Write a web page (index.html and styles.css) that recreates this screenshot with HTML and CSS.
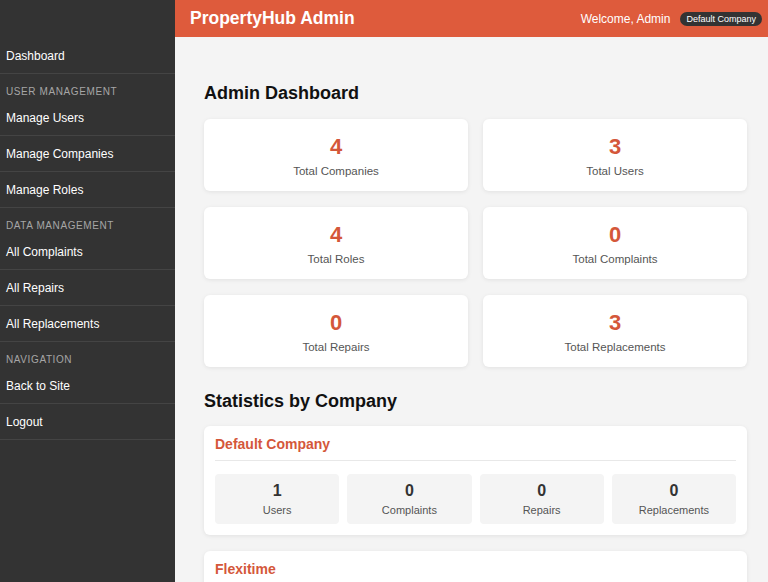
FILE: index.html
```html
<!DOCTYPE html>
<html>
<head>
<meta charset="utf-8">
<link rel="stylesheet" href="styles.css">
</head>
<body>
<div class="layout">
  <aside class="sidebar">
    <a class="nav-item">Dashboard</a>
    <div class="nav-heading">User Management</div>
    <a class="nav-item">Manage Users</a>
    <a class="nav-item">Manage Companies</a>
    <a class="nav-item">Manage Roles</a>
    <div class="nav-heading">Data Management</div>
    <a class="nav-item">All Complaints</a>
    <a class="nav-item">All Repairs</a>
    <a class="nav-item">All Replacements</a>
    <div class="nav-heading">Navigation</div>
    <a class="nav-item">Back to Site</a>
    <a class="nav-item">Logout</a>
  </aside>
  <div class="main">
    <header class="topbar">
      <div class="brand">PropertyHub Admin</div>
      <div class="user">
        <span class="welcome">Welcome, Admin</span>
        <span class="badge">Default Company</span>
      </div>
    </header>
    <div class="content">
      <h1 class="title">Admin Dashboard</h1>
      <div class="stats-grid">
        <div class="stat-card"><div class="stat-num">4</div><div class="stat-label">Total Companies</div></div>
        <div class="stat-card"><div class="stat-num">3</div><div class="stat-label">Total Users</div></div>
        <div class="stat-card"><div class="stat-num">4</div><div class="stat-label">Total Roles</div></div>
        <div class="stat-card"><div class="stat-num">0</div><div class="stat-label">Total Complaints</div></div>
        <div class="stat-card"><div class="stat-num">0</div><div class="stat-label">Total Repairs</div></div>
        <div class="stat-card"><div class="stat-num">3</div><div class="stat-label">Total Replacements</div></div>
      </div>
      <h2 class="title title-2">Statistics by Company</h2>
      <div class="company-card">
        <div class="company-name">Default Company</div>
        <div class="company-stats">
          <div class="cstat"><div class="cstat-num">1</div><div class="cstat-label">Users</div></div>
          <div class="cstat"><div class="cstat-num">0</div><div class="cstat-label">Complaints</div></div>
          <div class="cstat"><div class="cstat-num">0</div><div class="cstat-label">Repairs</div></div>
          <div class="cstat"><div class="cstat-num">0</div><div class="cstat-label">Replacements</div></div>
        </div>
      </div>
      <div class="company-card company-card-last">
        <div class="company-name">Flexitime</div>
      </div>
    </div>
  </div>
</div>
</body>
</html>
```
FILE: styles.css
```css
* { box-sizing: border-box; }
html, body { margin: 0; padding: 0; height: 100%; overflow: hidden; }
body {
  font-family: "Liberation Sans", Arial, sans-serif;
  background: #f4f4f4;
  color: #222;
}
.layout { display: flex; height: 582px; overflow: hidden; }
.sidebar {
  width: 175px;
  flex: 0 0 175px;
  background: #333333;
  padding-top: 38px;
  display: flex;
  flex-direction: column;
}
.nav-item {
  display: block;
  height: 36px;
  line-height: 36px;
  padding-left: 6px;
  color: #ffffff;
  font-size: 12px;
  border-bottom: 1px solid #444;
}
.nav-heading {
  height: 26px;
  padding-left: 6px;
  padding-top: 12px;
  color: #a6a6a6;
  font-size: 10px;
  letter-spacing: 0.6px;
  text-transform: uppercase;
  line-height: 12px;
}
.main { flex: 1; display: flex; flex-direction: column; min-width: 0; overflow: hidden; }
.topbar {
  flex: 0 0 37px;
  height: 37px;
  background: #de5b3c;
  display: flex;
  align-items: center;
  justify-content: space-between;
  padding: 0 6px 0 15px;
  color: #fff;
}
.brand { font-size: 17.5px; font-weight: bold; }
.user { display: flex; align-items: center; gap: 10px; }
.welcome { font-size: 12px; }
.badge {
  background: #333;
  color: #fff;
  font-size: 9px;
  padding: 2px 6px;
  border-radius: 8px;
  line-height: 10px;
}
.content { padding: 0 21px 0 29px; }
.title {
  margin: 0;
  font-size: 18px;
  font-weight: bold;
  color: #111;
  padding-top: 45px;
  padding-bottom: 15px;
  line-height: 22px;
}
.title-2 { padding-top: 23px; padding-bottom: 14px; }
.stats-grid {
  display: grid;
  grid-template-columns: 1fr 1fr;
  column-gap: 15px;
  row-gap: 16px;
}
.stat-card {
  background: #fff;
  border-radius: 6px;
  height: 72px;
  box-shadow: 0 1px 4px rgba(0,0,0,0.08);
  display: flex;
  flex-direction: column;
  align-items: center;
  padding-top: 16px;
}
.stat-num { font-size: 22px; font-weight: bold; color: #d4573a; line-height: 24px; }
.stat-label { font-size: 11.5px; color: #555; margin-top: 5px; line-height: 14px; }
.company-card {
  background: #fff;
  border-radius: 6px;
  box-shadow: 0 1px 4px rgba(0,0,0,0.08);
  padding: 10px 11px 11px 11px;
  margin-bottom: 16px;
}
.company-card-last { height: 60px; }
.company-name {
  font-size: 14px;
  font-weight: bold;
  color: #d4573a;
  line-height: 16px;
  padding-bottom: 8px;
  border-bottom: 1px solid #e8e8e8;
  margin-bottom: 13px;
}
.company-stats {
  display: grid;
  grid-template-columns: repeat(4, 1fr);
  gap: 8px;
}
.cstat {
  background: #f4f4f4;
  border-radius: 4px;
  height: 50px;
  display: flex;
  flex-direction: column;
  align-items: center;
  padding-top: 8px;
}
.cstat-num { font-size: 16px; font-weight: bold; color: #333; line-height: 18px; }
.cstat-label { font-size: 11px; color: #555; margin-top: 4px; line-height: 13px; }
```
